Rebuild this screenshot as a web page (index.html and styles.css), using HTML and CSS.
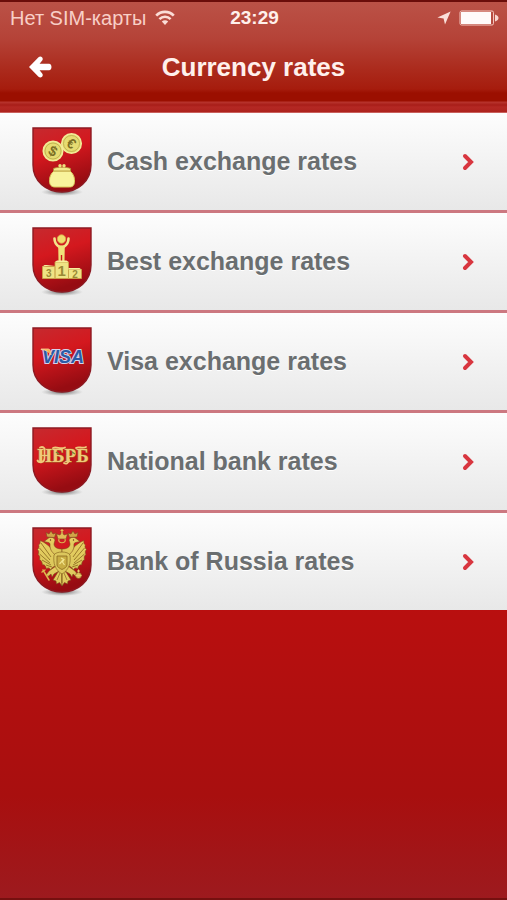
FILE: index.html
```html
<!DOCTYPE html>
<html lang="en">
<head>
  <meta charset="UTF-8">
  <meta name="viewport" content="width=device-width, initial-scale=1.0">
  <title>Currency rates</title>
  <link rel="stylesheet" href="styles.css">
</head>
<body>
  <!-- Shared shapes -->
  <svg class="defs" width="0" height="0" aria-hidden="true">
    <defs>
      <linearGradient id="shieldFill" x1="0" y1="0" x2="0.3" y2="1">
        <stop offset="0" stop-color="#c62a2f"/>
        <stop offset="0.45" stop-color="#d4181e"/>
        <stop offset="1" stop-color="#960c12"/>
      </linearGradient>
      <radialGradient id="shieldShadow">
        <stop offset="0" stop-color="#555" stop-opacity="0.9"/>
        <stop offset="1" stop-color="#888" stop-opacity="0"/>
      </radialGradient>
      <linearGradient id="gold" x1="0" y1="0" x2="0" y2="1">
        <stop offset="0" stop-color="#e9cf62"/>
        <stop offset="1" stop-color="#d9c65a"/>
      </linearGradient>
      <symbol id="shield" viewBox="0 0 60 70">
        <ellipse cx="30" cy="65" rx="21" ry="4" fill="url(#shieldShadow)"/>
        <path d="M1 1H59V38C59 54 46 65 30 65C14 65 1 54 1 38Z" fill="url(#shieldFill)" stroke="#8d1a22" stroke-width="1.4"/>
      </symbol>
      <symbol id="chevron" viewBox="0 0 14 20">
        <path d="M4 4L10 10L4 16" fill="none" stroke="#d8363f" stroke-width="4" stroke-linecap="round" stroke-linejoin="miter"/>
      </symbol>
    </defs>
  </svg>

  <header class="header">
    <div class="status-bar">
      <div class="carrier">
        <span>Нет SIM-карты</span>
        <svg width="20" height="16" viewBox="0 0 20 16" aria-hidden="true">
          <g fill="none" stroke="#fbdcd6" stroke-width="2.6">
            <path d="M1.2 5.6C6 0.6 14 0.6 18.8 5.6"/>
            <path d="M4.4 9.2C7.6 6 12.4 6 15.6 9.2"/>
          </g>
          <path d="M6.8 11.6C8.6 9.9 11.4 9.9 13.2 11.6L10 15Z" fill="#fbdcd6"/>
        </svg>
      </div>
      <span class="time">23:29</span>
      <div class="indicators">
        <svg width="14" height="14" viewBox="0 0 14 14" aria-hidden="true">
          <path d="M13.6 0.4L0.4 6.4L6.6 7.4L8 13.6Z" fill="#fbe0da"/>
        </svg>
        <svg width="40" height="16" viewBox="0 0 40 16" aria-hidden="true">
          <rect x="1" y="1" width="33.5" height="14" rx="1.5" fill="none" stroke="#f3c4bc" stroke-width="1"/>
          <rect x="2" y="2" width="30" height="12" fill="#fffafa"/>
          <path d="M36 4.5C38.5 5.5 39.5 6.5 39.5 8C39.5 9.5 38.5 10.5 36 11.5Z" fill="#f8d6d0"/>
        </svg>
      </div>
    </div>
    <div class="title-bar">
      <button class="back" type="button" aria-label="Back">
        <svg width="24" height="24" viewBox="0 0 24 24" aria-hidden="true">
          <path d="M1 12L10.5 2.2C13 0.2 16 3 14.2 5.6L11.6 8.8H21C24.3 8.8 24.3 15.2 21 15.2H11.6L14.2 18.4C16 21 13 23.8 10.5 21.8Z" fill="#fff"/>
        </svg>
      </button>
      <h1>Currency rates</h1>
    </div>
  </header>

  <main class="content">
    <ul class="rates">
      <li>
        <a href="#cash">
          <svg class="badge" viewBox="0 0 60 70" aria-hidden="true">
            <use href="#shield"/>
            <g fill="#e6dc72" stroke="#f2ec98" stroke-width="1.5">
              <circle cx="21" cy="24" r="9.8"/>
              <circle cx="39.5" cy="16.5" r="9.8"/>
            </g>
            <g fill="none" stroke="#b3a545" stroke-width="0.7">
              <circle cx="21" cy="24" r="8"/>
              <circle cx="39.5" cy="16.5" r="8"/>
            </g>
            <text class="coin" x="21" y="29" transform="rotate(28 21 24)">$</text>
            <text class="coin" x="39.5" y="21.5" transform="rotate(35 39.5 16.5)">€</text>
            <path d="M22 44C18.5 47 17.5 50 17.5 54C17.5 58 19.5 60 23 60H37.5C41 60 42.5 58 42.5 54C42.5 50 41.5 47 38 44Z" fill="#f8f39c" stroke="#d9cb5c"/>
            <path d="M21.5 41.5C25 39.8 35 39.8 38.5 41.5V44H21.5Z" fill="#f2e98a" stroke="#b08e35" stroke-width="0.8"/>
            <circle cx="28" cy="38.8" r="1.7" fill="#eee17c"/>
            <circle cx="32" cy="38.8" r="1.7" fill="#eee17c"/>
          </svg>
          <span>Cash exchange rates</span>
          <svg class="chevron" aria-hidden="true"><use href="#chevron"/></svg>
        </a>
      </li>
      <li>
        <a href="#best">
          <svg class="badge" viewBox="0 0 60 70" aria-hidden="true">
            <use href="#shield"/>
            <circle cx="29.5" cy="12" r="4.2" fill="#f0de6c" stroke="#d9a84a" stroke-width="0.8"/>
            <path d="M22.5 11.5C22.5 15.5 24 18 27.5 20H31.5C35 18 36.5 15.5 36.5 11.5" fill="none" stroke="#f3e58a" stroke-width="2.6" stroke-linecap="round"/>
            <path d="M26.2 18.5H32.8L32.5 34.5H30.2V28H28.8V34.5H26.5Z" fill="#f0e07a"/>
            <path d="M10.5 39.500H23V51.500H10.5Z M23 35H36.5V51.500H23Z M36.500 42.500H49.500V51.500H36.500Z" fill="#efe384" stroke="#c9a449" stroke-width="0.8"/>
            <path d="M10.500 39.500L12.500 38H23M23 35L25 33.500H34.500L36.500 35M36.500 42.500V41H47.500L49.500 42.500" fill="#f8ef9e"/>
            <text class="place" x="16.700" y="49.500">3</text>
            <text class="place first" x="29.700" y="49">1</text>
            <text class="place" x="43" y="50.500">2</text>
          </svg>
          <span>Best exchange rates</span>
          <svg class="chevron" aria-hidden="true"><use href="#chevron"/></svg>
        </a>
      </li>
      <li>
        <a href="#visa">
          <svg class="badge" viewBox="0 0 60 70" aria-hidden="true">
            <use href="#shield"/>
            <text class="visa" x="10" y="36">VISA</text>
            <path d="M9 22H16C17.5 22 18.3 23 18.5 24.5L19 28C17 24.5 14 23 9 22.5Z" fill="#f6b548" stroke="#f7d3a0" stroke-width="0.8"/>
          </svg>
          <span>Visa exchange rates</span>
          <svg class="chevron" aria-hidden="true"><use href="#chevron"/></svg>
        </a>
      </li>
      <li>
        <a href="#national">
          <svg class="badge" viewBox="0 0 60 70" aria-hidden="true">
            <use href="#shield"/>
            <text class="nbrb" x="31" y="35">НБРБ</text>
            <g fill="none" stroke="#efc97a" stroke-width="1.8" stroke-linecap="round">
              <path d="M8 20.5C10 19.5 11.500 20 12.500 21.5V31C12.500 35.5 7.500 36.5 5.500 33.500"/>
              <path d="M21 21C25 19 28 23 33 20.500M44 21C47 19 50 22 54 20"/>
              <path d="M32 36C34 37.500 37 36 37 33"/>
            </g>
            <path d="M24 25L27 27M40 25L43 27" stroke="#6f8a3a" stroke-width="1.5"/>
          </svg>
          <span>National bank rates</span>
          <svg class="chevron" aria-hidden="true"><use href="#chevron"/></svg>
        </a>
      </li>
      <li>
        <a href="#russia">
          <svg class="badge" viewBox="0 0 60 70" aria-hidden="true">
            <use href="#shield"/>
            <!-- Left half of the eagle, reused flipped for the right half -->
            <g id="eagleHalf" stroke="#7d4a1c" stroke-width="0.6" stroke-linejoin="round">
              <path d="M22 25C18 19 12 15 8 13.5C8.5 16 8 17 6.5 18C7.5 19.5 7 21 5.5 22.5C7 24 7 25.5 6 27.5C8 28.5 8 30.5 7.5 33C9.5 33 10 35 10.5 38C12.5 37 13.5 39 14.5 42C16 40 17.5 41 19 43C20 40 22 39 25 39Z" fill="url(#gold)"/>
              <path d="M9 16L19 30M7.5 21L18 33M7.5 27L18 36M10 33L19 38M14 38L20 40" fill="none" stroke="#927025" stroke-width="0.9"/>
              <path d="M30 22C25 22 22 20 22 17C22 15.5 23 14.5 23 13C22 10 18 9.5 16 11.5L12 14.5L16.5 15.5C18.5 16 18 18 18 20C19 25 22 27 25 29L30 29Z" fill="url(#gold)"/>
              <path d="M15 10L14 5.5L17 7L19 4L21 7L24 6L22.5 10.5Z" fill="#d2a548"/>
              <circle cx="18.5" cy="13" r="0.7" fill="#6c301b" stroke="none"/>
              <path d="M24 39L17 44L14 48L16 49.5L19 47L20 50L22 47L27 44Z" fill="url(#gold)"/>
              <path d="M30 44L26 45L21 53L24 54L24.5 57L27.5 55.5L30 59Z" fill="url(#gold)"/>
              <path d="M28 46L25 53M30 46V56" fill="none" stroke="#927025" stroke-width="0.8"/>
            </g>
            <use href="#eagleHalf" transform="translate(60 0) scale(-1 1)"/>
            <path d="M26 12L24.5 7L28 8L30 4.5L32 8L35.5 7L34 12Z" fill="#e2bc57" stroke="#7d4a1c" stroke-width="0.6"/>
            <path d="M30 2V6M28.5 3.5H31.5" stroke="#e2bc57" stroke-width="1.2"/>
            <path d="M27 12C25 17 35 17 33 12" fill="none" stroke="#dcb34f" stroke-width="1.2"/>
            <path d="M22 28C24 24 36 24 38 28C39 36 37 43 30 47C23 43 21 36 22 28Z" fill="#dcc75d" stroke="#8d6b23" stroke-width="0.7"/>
            <path d="M25 29H35V38C35 40 32 41.5 30 42.5C28 41.5 25 40 25 38Z" fill="#c9ad43" stroke="#8a681e" stroke-width="0.8"/>
            <path d="M29 31L32 32.5L30.5 35L32.5 38M31 33L27.5 37" fill="none" stroke="#f1e38d" stroke-width="1.2"/>
            <path d="M11 43L17 53M10 45L13 43" stroke="#ddb84f" stroke-width="1.5" stroke-linecap="round"/>
            <circle cx="46.5" cy="48.5" r="3" fill="#ddc05a" stroke="#7d4a1c" stroke-width="0.6"/>
            <path d="M46.5 45.5V42.5M45 44H48M43.5 48.5H49.5" stroke="#e7cd6c" stroke-width="1"/>
          </svg>
          <span>Bank of Russia rates</span>
          <svg class="chevron" aria-hidden="true"><use href="#chevron"/></svg>
        </a>
      </li>
    </ul>
  </main>
</body>
</html>
```

FILE: styles.css
```css
/* General Styles */
* {
  box-sizing: border-box;
}

body {
  margin: 0;
  min-height: 100vh;
  display: flex;
  flex-direction: column;
  font-family: "Liberation Sans", Arial, sans-serif;
  background: #9c191c;
}

.defs {
  position: absolute;
}

/* Header */
.header {
  border-top: 2px solid #6b0d0a;
  border-bottom: 1px solid #c9605c;
  padding-bottom: 12px;
  background: linear-gradient(#bb5247 0, #b54338 36px, #ab2a1c 68px, #a61c0d 87px, #9b0f00 91px, #9b0f00 99px, #b8352e 100px, #a81d18 103px, #b42823 105px, #ae231e 100%);
  color: #fff0ec;
}

.status-bar {
  display: grid;
  grid-template-columns: 1fr auto 1fr;
  align-items: center;
  height: 32px;
  padding: 0 8px 0 10px;
}

.carrier {
  display: flex;
  align-items: center;
  gap: 9px;
  font-size: 20px;
  color: #f8cfc7;
  white-space: nowrap;
}

.time {
  font-size: 19px;
  font-weight: bold;
}

.indicators {
  display: flex;
  align-items: center;
  justify-content: flex-end;
  gap: 8px;
}

.title-bar {
  display: grid;
  grid-template-columns: 52px 1fr 52px;
  align-items: center;
  height: 66px;
}

.back {
  display: flex;
  justify-content: flex-end;
  padding: 0;
  border: none;
  background: none;
  cursor: pointer;
}

h1 {
  margin: 0;
  font-size: 26px;
  line-height: 32px;
  text-align: center;
}

/* Rates list */
.content {
  flex: 1;
  border-bottom: 2px solid #75100f;
  background: linear-gradient(#bc1010 0%, #b90f0f 63%, #a80f0f 87%, #9d1a1e 100%);
}

.rates {
  margin: 0;
  padding: 0;
  list-style: none;
}

.rates li + li {
  border-top: 3px solid #cc7880;
}

.rates a {
  display: flex;
  align-items: center;
  height: 97px;
  padding: 0 32px;
  background: linear-gradient(#fdfdfd, #e8e8e8);
  color: #6a6e70;
  font-size: 25px;
  font-weight: bold;
  text-decoration: none;
  text-shadow: 0 1px 0 #fff;
}

.rates span {
  flex: 1;
  margin-left: 15px;
}

.badge {
  width: 60px;
  height: 70px;
}

.chevron {
  width: 14px;
  height: 20px;
}

/* Lettering inside the badges */
.badge text {
  text-shadow: none;
}

.coin {
  font-size: 14px;
  fill: #7b6f24;
  text-anchor: middle;
}

.place {
  font-size: 10px;
  fill: #9a8a35;
  text-anchor: middle;
}

.first {
  font-size: 15px;
}

.visa {
  font-size: 18px;
  font-style: italic;
  fill: #2b5ba6;
  stroke: #d5d3ea;
  stroke-width: 2px;
  paint-order: stroke;
}

.nbrb {
  font-family: "Liberation Serif", serif;
  font-size: 19px;
  font-weight: bold;
  fill: #efc97a;
  stroke: #a86a2a;
  stroke-width: 1px;
  paint-order: stroke;
  text-anchor: middle;
}
```
